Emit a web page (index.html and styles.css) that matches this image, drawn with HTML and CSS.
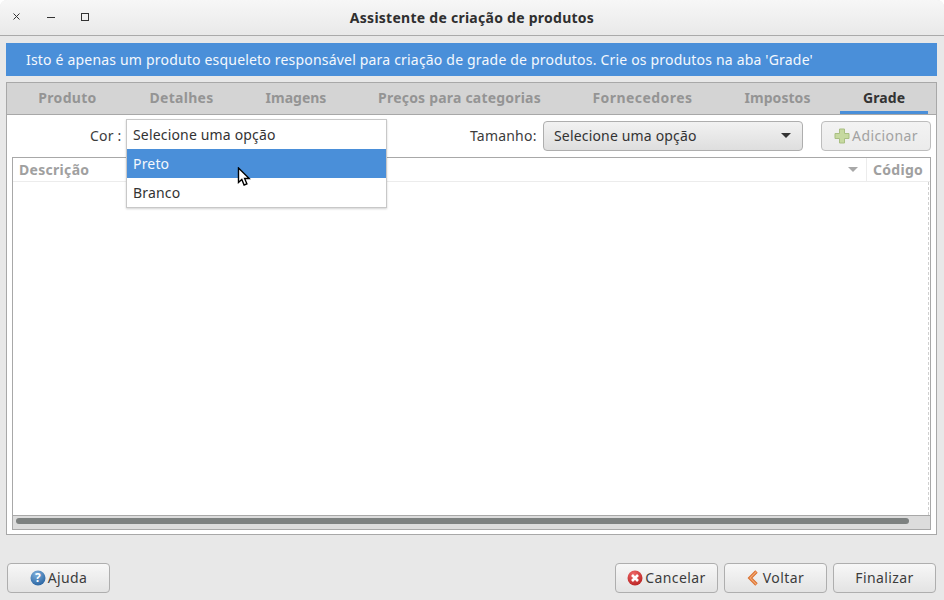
FILE: index.html
```html
<!DOCTYPE html>
<html lang="pt">
<head>
<meta charset="utf-8">
<title>Assistente de criação de produtos</title>
<link rel="stylesheet" href="styles.css">
</head>
<body>
<div class="window">
  <header class="titlebar">
    <div class="wm">
      <svg class="wm-icon" viewBox="0 0 10 10"><path d="M1.500 1.500l6 6M7.500 1.500l-6 6" stroke="#333" fill="none"/></svg>
      <svg class="wm-icon" viewBox="0 0 10 10"><path d="M1 5.500h8" stroke="#333" fill="none"/></svg>
      <svg class="wm-icon" viewBox="0 0 10 10"><rect x="1.500" y="1.500" width="7" height="7" stroke="#333" fill="none"/></svg>
    </div>
    <div class="title">Assistente de criação de produtos</div>
  </header>
  <main class="body">
    <div class="notice">Isto é apenas um produto esqueleto responsável para criação de grade de produtos. Crie os produtos na aba 'Grade'</div>
    <section class="notebook">
      <nav class="tabs">
        <span class="tab t-produto">Produto</span>
        <span class="tab t-detalhes">Detalhes</span>
        <span class="tab t-imagens">Imagens</span>
        <span class="tab t-precos">Preços para categorias</span>
        <span class="tab t-fornecedores">Fornecedores</span>
        <span class="tab t-impostos">Impostos</span>
        <span class="tab t-grade active">Grade</span>
      </nav>
      <div class="page">
        <div class="controls">
          <label class="lbl lbl-cor">Cor :</label>
          <div class="combo-slot">
            <ul class="menu">
              <li class="item">Selecione uma opção</li>
              <li class="item sel">Preto</li>
              <li class="item">Branco</li>
            </ul>
            <svg class="cursor" viewBox="0 0 14 20"><path d="M1.500 1v14.500l3.300-3 2.300 5.500 2.800-1.200-2.300-5.300h4.600z" fill="#fff" stroke="#000" stroke-width="1.400"/></svg>
          </div>
          <label class="lbl lbl-tam">Tamanho:</label>
          <div class="combo"><span>Selecione uma opção</span><i class="arrow"></i></div>
          <button class="btn add" disabled>
            <svg class="ic" viewBox="0 0 16 16"><path d="M5.500 1h5v4.500h4.500v5h-4.500v4.500h-5v-4.500h-4.500v-5h4.500z" fill="#c6d9a0" stroke="#a9bf82"/></svg>Adicionar
          </button>
        </div>
        <div class="table">
          <div class="thead">
            <div class="th th-desc"><span>Descrição</span><i class="arrow small"></i></div>
            <div class="th th-code">Código</div>
          </div>
          <div class="tbody"></div>
          <div class="hscroll"><div class="thumb"></div></div>
        </div>
      </div>
    </section>
  </main>
  <footer class="actions">
    <button class="btn foot">
      <svg class="ic" viewBox="0 0 16 16"><defs><radialGradient id="h" cx="40%" cy="25%" r="85%"><stop offset="0" stop-color="#7fb0dc"/><stop offset="1" stop-color="#215d9c"/></radialGradient></defs><circle cx="8" cy="8" r="7.500" fill="url(#h)"/><text x="8" y="12" class="glyph">?</text></svg>Ajuda
    </button>
    <div class="spacer"></div>
    <button class="btn foot">
      <svg class="ic" viewBox="0 0 16 16"><defs><radialGradient id="c" cx="40%" cy="25%" r="85%"><stop offset="0" stop-color="#ef6a6a"/><stop offset="1" stop-color="#b51c1c"/></radialGradient></defs><circle cx="8" cy="8" r="7.500" fill="url(#c)"/><path d="M5 5l6 6M11 5l-6 6" stroke="#fff" stroke-width="2.600"/></svg>Cancelar
    </button>
    <button class="btn foot">
      <svg class="ic ic-back" viewBox="0 0 12 16"><path d="M9.500 1.500l-6.500 6.500 6.500 6.500" fill="none" stroke="#d96f2e" stroke-width="3.400"/><path d="M9.500 1.500l-6.500 6.500 6.500 6.500" fill="none" stroke="#f3a873" stroke-width="1.200"/></svg>Voltar
    </button>
    <button class="btn foot">Finalizar</button>
  </footer>
</div>
</body>
</html>
```
FILE: styles.css
```css
* { box-sizing: border-box; }
html, body { margin: 0; padding: 0; }
body { background: #fff; font-family: "Noto Sans", "DejaVu Sans", sans-serif; font-size: 14px; color: #3c3c3c; }
.window { width: 944px; height: 600px; display: flex; flex-direction: column; background: #e8e8e8; overflow: hidden; border-radius: 7px 7px 0 0; }
.titlebar { height: 36px; flex: none; display: flex; align-items: center; position: relative; justify-content: center; background: linear-gradient(#f7f7f7, #e9e9e9); border-bottom: 1px solid #aaa; }
.wm { position: absolute; left: 12px; top: 12px; display: flex; gap: 24px; }
.wm-icon { width: 10px; height: 10px; display: block; }
.title { font-weight: 700; font-size: 14px; color: #2f2f2f; letter-spacing: 0.26px; }
.body { flex: none; padding: 7px 7px 0 6px; }
.notice { height: 33px; background: #4a8fd9; color: #f4f8fd; padding-left: 20px; line-height: 33px; letter-spacing: 0.19px; white-space: nowrap; }
.notebook { margin-top: 6px; height: 453px; border: 1px solid #a8a8a8; background: #fff; display: flex; flex-direction: column; }
.tabs { height: 32px; flex: none; background: #d4d4d4; border-bottom: 1px solid #a8a8a8; display: flex; padding-left: 8px; gap: 6px; }
.tab { height: 31px; line-height: 30px; text-align: center; font-weight: 700; color: #949494; letter-spacing: 0.3px; white-space: nowrap; flex: none; }
.t-produto { width: 105px; }
.t-detalhes { width: 111px; }
.t-imagens { width: 106px; letter-spacing: 0; }
.t-precos { width: 209px; letter-spacing: 0.2px; }
.t-fornecedores { width: 145px; letter-spacing: 0.45px; }
.t-impostos { width: 113px; letter-spacing: 0.05px; }
.t-grade { width: 88px; letter-spacing: 0.1px; }
.tab.active { color: #333; border-bottom: 3px solid #4a8fd9; }
.page { flex: 1; padding: 5px 5px 4px 5px; display: flex; flex-direction: column; }
.controls { height: 30px; flex: none; display: flex; align-items: center; margin-top: 1px; }
.lbl { white-space: nowrap; color: #3c3c3c; padding-bottom: 1px; }
.lbl-cor { margin-left: 78px; width: 36px; letter-spacing: 0.2px; }
.combo-slot { width: 260px; height: 30px; position: relative; flex: none; }
.menu { position: absolute; left: 0; top: -2px; width: 261px; margin: 0; padding: 0; list-style: none; background: #fff; border: 1px solid #c8c8c8; box-shadow: 0 1px 2px rgba(0,0,0,.18); z-index: 3; }
.item { height: 29px; line-height: 29px; padding-left: 6px; color: #333; letter-spacing: 0.17px; white-space: nowrap; }
.item.sel { background: #4a8fd9; color: #f4f8fd; }
.cursor { position: absolute; left: 111px; top: 46px; width: 14px; height: 20px; z-index: 4; }
.lbl-tam { margin-left: 84px; width: 73px; letter-spacing: 0.2px; }
.combo { width: 260px; height: 30px; flex: none; display: flex; align-items: center; justify-content: space-between; padding: 0 11px 1px 10px; border: 1px solid #aeaeae; border-radius: 4px; background: linear-gradient(#f2f2f2, #dedede); color: #333; letter-spacing: 0.17px; }
.arrow { width: 0; height: 0; border: 5px solid transparent; border-top: 5px solid #333; border-bottom: 0; display: block; }
.arrow.small { border-top-color: #a8a8a8; }
.btn { font: inherit; color: #3c3c3c; display: inline-flex; align-items: center; justify-content: center; height: 30px; width: 103px; flex: none; border: 1px solid #aeaeae; border-radius: 4px; background: linear-gradient(#f7f7f7, #e3e3e3); padding: 0 0 1px; letter-spacing: 0.4px; }
.add { margin-left: 18px; width: 110px; color: #a2a2a2; background: linear-gradient(#f3f3f3, #ebebeb); border-color: #bdbdbd; }
.ic { width: 16px; height: 16px; margin-right: 2px; flex: none; }
.ic-back { width: 12px; margin-right: 4px; }
.glyph { fill: #fff; font: 700 12px "Noto Sans", sans-serif; text-anchor: middle; }
.table { margin-top: 6px; height: 373px; border: 1px solid #a8a8a8; display: flex; flex-direction: column; background: #fff; }
.thead { height: 24px; flex: none; display: flex; border-bottom: 1px solid #ececec; font-weight: 700; color: #a0a0a0; }
.th { display: flex; align-items: center; padding: 0 6px; letter-spacing: 0.3px; }
.th-desc { flex: 1; justify-content: space-between; padding-right: 8px; }
.th-code { width: 64px; border-left: 1px solid #ececec; }
.tbody { flex: 1; border-right: 1px dashed #cfcfcf; margin-right: 1px; }
.hscroll { height: 14px; flex: none; background: #dcdcdc; border-top: 1px solid #a8a8a8; padding: 2px 21px 0 3px; }
.thumb { height: 6px; border-radius: 3px; background: #7d8180; }
.actions { flex: 1; display: flex; align-items: flex-start; gap: 6px; padding: 28px 8px 0 7px; }
.spacer { flex: 1; }
```
